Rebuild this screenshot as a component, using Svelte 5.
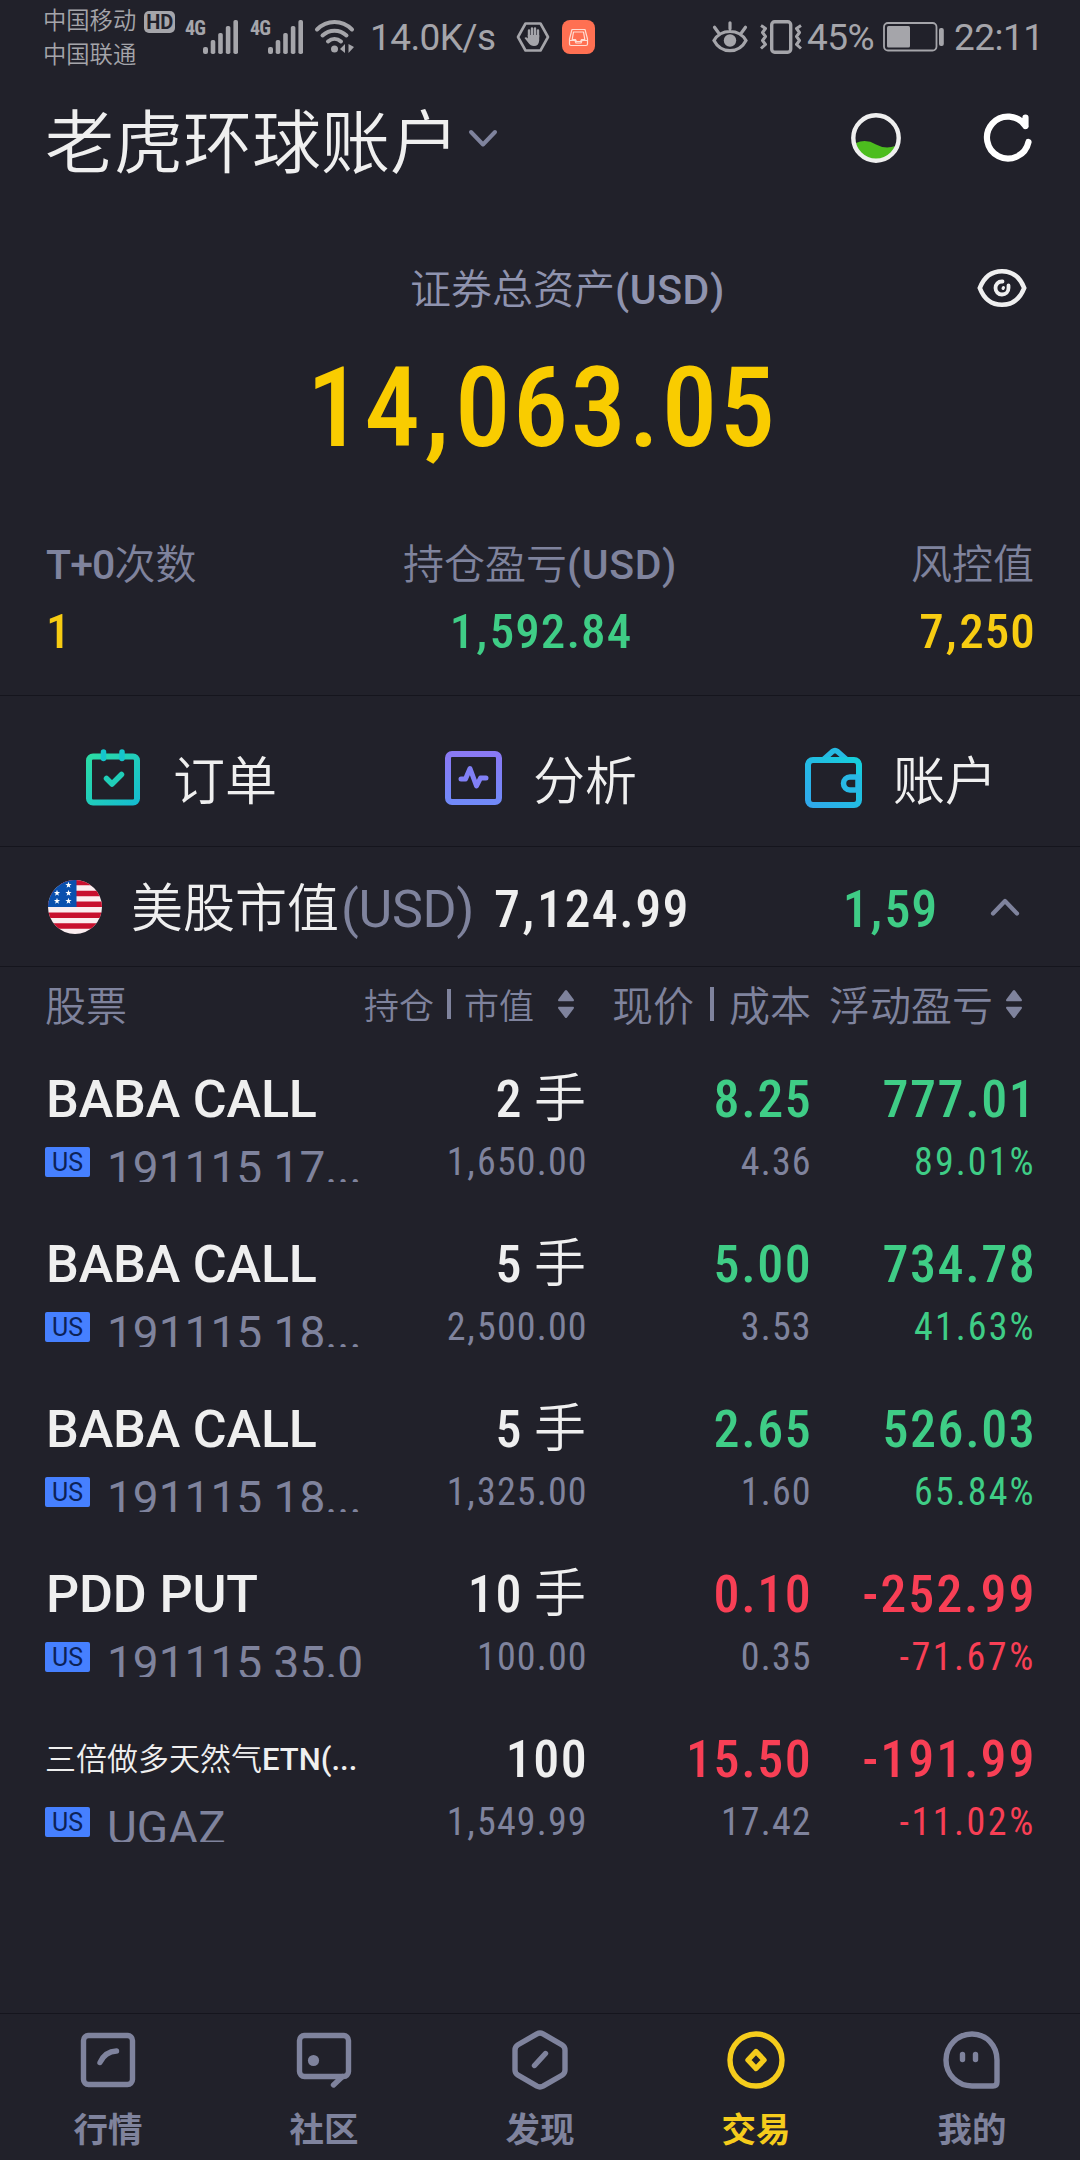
<script lang="ts">
	interface Holding {
		name: string;
		small?: boolean;
		code: string;
		qty: string;
		unit?: string;
		value: string;
		price: string;
		cost: string;
		pl: string;
		plPct: string;
	}

	const holdings: Holding[] = [
		{ name: 'BABA CALL', code: '191115 17...', qty: '2', unit: '手', value: '1,650.00', price: '8.25', cost: '4.36', pl: '777.01', plPct: '89.01%' },
		{ name: 'BABA CALL', code: '191115 18...', qty: '5', unit: '手', value: '2,500.00', price: '5.00', cost: '3.53', pl: '734.78', plPct: '41.63%' },
		{ name: 'BABA CALL', code: '191115 18...', qty: '5', unit: '手', value: '1,325.00', price: '2.65', cost: '1.60', pl: '526.03', plPct: '65.84%' },
		{ name: 'PDD PUT', code: '191115 35.0', qty: '10', unit: '手', value: '100.00', price: '0.10', cost: '0.35', pl: '-252.99', plPct: '-71.67%' },
		{ name: '三倍做多天然气', small: true, code: 'UGAZ', qty: '100', value: '1,549.99', price: '15.50', cost: '17.42', pl: '-191.99', plPct: '-11.02%' }
	];

	const tabs = [
		{ id: 'quotes', label: '行情' },
		{ id: 'community', label: '社区' },
		{ id: 'discover', label: '发现' },
		{ id: 'trade', label: '交易' },
		{ id: 'mine', label: '我的' }
	];

	let active = $state('trade');
</script>

{#snippet num(text: string)}
	{#each text.split(',') as part, i}{#if i > 0}<span class="comma">,</span>{/if}{part}{/each}
{/snippet}

{#snippet signal()}
	<span class="signal">
		<span class="signal__gen">4G</span>
		<svg width="36" height="34" viewBox="0 0 36 34" fill="currentColor">
			<rect x="0" y="27" width="5" height="7" rx="2" />
			<rect x="7.7" y="20" width="4.6" height="14" rx="1.8" />
			<rect x="15.2" y="13" width="4.6" height="21" rx="1.8" />
			<rect x="22.8" y="6" width="4.6" height="28" rx="1.8" />
			<rect x="30.4" y="0" width="4.6" height="34" rx="1.8" />
		</svg>
	</span>
{/snippet}

{#snippet sort()}
	<svg class="sort" width="16" height="28" viewBox="0 0 16 28" fill="currentColor">
		<path d="M7 .6a1.3 1.3 0 0 1 2 0l6.6 8.6c.7 1 .3 2-.8 2H1.2c-1.1 0-1.5-1-.8-2zM7 27.4a1.3 1.3 0 0 0 2 0l6.6-8.6c.7-1 .3-2-.8-2H1.2c-1.1 0-1.5 1-.8 2z" />
	</svg>
{/snippet}

<main class="screen">
	<div class="status">
		<div class="status__carriers">
			<div>中国移动<span class="hd">HD</span></div>
			<div>中国联通</div>
		</div>
		{@render signal()}
		{@render signal()}
		<svg class="wifi" width="40" height="34" viewBox="0 0 40 34" fill="none" stroke="currentColor" stroke-width="4" stroke-linecap="round">
			<path d="M2 9.5C12-.5 27-.5 37 9.5M7.5 15.5c7-6.5 17-6.5 24 0M13 21.5c4-3.5 9-3.5 13 0" />
			<circle cx="19.5" cy="29" r="3.5" fill="currentColor" stroke="none" />
			<path d="M30 24v9l-5-4zM33.5 24v9l5.5-6z" fill="currentColor" stroke="none" />
		</svg>
		<span class="status__speed">14.0K/s</span>
		<svg class="hand" width="34" height="30" viewBox="0 0 34 30" fill="none" stroke="currentColor">
			<path d="M9.5 1.5h15l7.5 13.5-7.5 13.5h-15L2 15z" stroke-width="2.6" stroke-linejoin="round" />
			<path d="M13 14V8.5M16 14V6.5M19 14V6.5M22 15V8.5" stroke-width="2.4" stroke-linecap="round" />
			<path d="M11.8 13h11.4v5.5q-.5 5.5-5.2 5.5-3.5 0-5.5-3L8.5 16q1.5-1.8 3.3.5z" fill="currentColor" stroke="none" />
		</svg>
		<svg width="33" height="34" viewBox="0 0 33 34" fill="none">
			<rect width="33" height="34" rx="8" fill="#ff7052" />
			<path d="M10 9.5h13L25.5 19v5q0 1.5-1.5 1.5H9q-1.5 0-1.5-1.5v-5zM7.5 20.5h5.5l1 2.5h5l1-2.5h5.5M11.5 12l-1.3 7.5h3.3l1 2h4l1-2h3.3L21.5 12z" stroke="#ffdcd2" stroke-width="1.2" stroke-linejoin="round" />
		</svg>

		<svg class="care" width="36" height="32" viewBox="0 0 36 32" fill="none" stroke="currentColor" stroke-width="3.2" stroke-linecap="round">
			<path d="M2 19.5C9 7.5 27 7.5 34 19.5 27 33 9 33 2 19.5zM18 1.8v6M2.5 6.2l4 5.5M33.5 6.2l-4 5.5" />
			<circle cx="18" cy="19.5" r="6.2" fill="currentColor" stroke="none" />
		</svg>
		<svg class="vibrate" width="42" height="34" viewBox="0 0 42 34" fill="none" stroke="currentColor" stroke-width="3.4" stroke-linejoin="round">
			<rect x="11.7" y="1.7" width="19" height="30.6" rx="3" />
			<path d="M1 5.5l4.5 3-3 4 3 4-3 4 3 4-4.5 4M41 5.5l-4.5 3 3 4-3 4 3 4-3 4 4.5 4" stroke-width="3" />
		</svg>
		<span class="status__battery">45%</span>
		<svg class="battery" width="62" height="30" viewBox="0 0 62 30" fill="none">
			<rect x="1" y="1" width="52.5" height="27.5" rx="4" stroke="currentColor" stroke-width="1.8" />
			<rect x="4" y="4" width="23" height="21.5" rx="1.5" fill="currentColor" />
			<rect x="56" y="6" width="4.8" height="18" rx="2" fill="currentColor" />
		</svg>
		<span class="status__time">22:11</span>
	</div>

	<header class="header">
		<h1>老虎环球账户</h1>
		<svg class="header__chevron" width="30" height="18" viewBox="0 0 30 18" fill="none" stroke="#7f839d" stroke-width="4" stroke-linecap="round" stroke-linejoin="round">
			<path d="M3 3l12 12.5L27 3" />
		</svg>
		<svg class="header__level" width="50" height="50" viewBox="0 0 50 50">
			<path d="M5 30q10-4.5 20 1.5 9 5 19.5 1.5A20.5 20.5 0 0 1 5 30z" fill="#4cbd1e" />
			<circle cx="25" cy="25" r="22.7" fill="none" stroke="#efefef" stroke-width="4.4" />
		</svg>
		<svg width="50" height="50" viewBox="0 0 50 50" fill="none" stroke="#fff" stroke-width="6.2" stroke-linecap="round" stroke-linejoin="round">
			<path d="M45.5 29A21 21 0 1 1 42.5 13M42.5 4.5v8.5" />
		</svg>
	</header>

	<section class="assets">
		<div class="assets__label">
			<span class="assets__title">证券总资产<b>(USD)</b></span>
			<svg width="50" height="40" viewBox="0 0 50 40" fill="none" stroke="#efefef" stroke-width="4.6" stroke-linecap="round">
				<path d="M2.8 20C7 9 15 3.2 25 3.2S43 9 47.2 20C43 31 35 36.8 25 36.8S7 31 2.8 20z" />
				<path d="M25.5 13.5c-4.5-.3-7 3-7 6.5s2.7 6.5 6.5 6.5 6.5-2.7 6.5-6.5V17.5" stroke-width="3.8" />
				<path d="M26 20.5l.5-1" stroke-width="3" />
			</svg>
		</div>
		<div class="assets__total">{@render num('14,063.05')}</div>
	</section>

	<section class="stats">
		<div class="stat">
			<div class="stat__label"><b>T+0</b>次数</div>
			<div class="stat__value yellow">1</div>
		</div>
		<div class="stat stat--center">
			<div class="stat__label">持仓盈亏<b>(USD)</b></div>
			<div class="stat__value up">{@render num('1,592.84')}</div>
		</div>
		<div class="stat stat--right">
			<div class="stat__label">风控值</div>
			<div class="stat__value yellow">{@render num('7,250')}</div>
		</div>
	</section>

	<section class="actions">
		<div class="action">
			<svg width="58" height="62" viewBox="0 0 58 62" fill="none" stroke-linecap="round" stroke-linejoin="round">
				<defs>
					<linearGradient id="g-order" x1="0" y1="0" x2="1" y2="1">
						<stop offset="0" stop-color="#2bdca6" />
						<stop offset="1" stop-color="#15bdd0" />
					</linearGradient>
				</defs>
				<rect x="5" y="9.5" width="48" height="46" rx="4" stroke="url(#g-order)" stroke-width="6" />
				<path d="M19.5 5v6.5M38 5v6.5" stroke="#15c5cc" stroke-width="5.5" />
				<path d="M22.5 31.5l5.5 5.5 9.500-9.5" stroke="#20ceb8" stroke-width="5.5" />
			</svg>
			<span>订单</span>
		</div>
		<div class="action">
			<svg width="58" height="62" viewBox="0 0 58 62" fill="none" stroke-linecap="round" stroke-linejoin="round">
				<defs>
					<linearGradient id="g-chart" x1="0" y1="0" x2="0" y2="1">
						<stop offset="0" stop-color="#8a79f4" />
						<stop offset="1" stop-color="#7189f8" />
					</linearGradient>
				</defs>
				<rect x="4" y="7" width="51" height="48" rx="4" stroke="url(#g-chart)" stroke-width="6" />
				<path d="M17 32h4.5L26 21.5 32.5 39l4-8H42" stroke="#8180f6" stroke-width="5" />
			</svg>
			<span>分析</span>
		</div>
		<div class="action">
			<svg width="58" height="62" viewBox="0 0 58 62" fill="none" stroke-linecap="round" stroke-linejoin="round">
				<defs>
					<linearGradient id="g-wallet" x1="0" y1="1" x2="1" y2="0">
						<stop offset="0" stop-color="#30a8ec" />
						<stop offset="1" stop-color="#16cfdb" />
					</linearGradient>
				</defs>
				<path d="M20 12l8.5-7.5q2.5-2 5 0L42 12" stroke="#26bae3" stroke-width="5.5" />
				<rect x="4" y="13" width="51" height="45" rx="5" stroke="url(#g-wallet)" stroke-width="6" />
				<path d="M54 30H46a6.5 6.5 0 0 0 0 13h8z" fill="#21212a" stroke="#28b8e5" stroke-width="5.5" />
			</svg>
			<span>账户</span>
		</div>
	</section>

	<section class="market">
		<svg class="market__flag" width="54" height="54" viewBox="0 0 54 54">
			<defs>
				<clipPath id="flag"><circle cx="27" cy="27" r="27" /></clipPath>
			</defs>
			<g clip-path="url(#flag)">
				<rect width="54" height="54" fill="#fbeef0" />
				<path d="M0 2.6h54M0 13.5h54M0 24.3h54M0 35.2h54M0 46h54" stroke="#c8102e" stroke-width="5.4" />
				<rect width="28.5" height="27" fill="#0a50ae" />
			</g>
			<g fill="#fff">
				{#each [[20.5, 5], [9, 13], [20.5, 13], [9, 21], [20.5, 21]] as [x, y]}
					<path transform="translate({x} {y})" d="M0-3.2l.8 2.2h2.3L1.2.5l.7 2.3L0 1.4l-1.9 1.4.7-2.3L-3.1-1h2.3z" />
				{/each}
			</g>
		</svg>
		<span class="market__name">美股市值</span><span class="market__currency">(USD)</span>
		<span class="market__value">{@render num('7,124.99')}</span>
		<span class="market__pl up">{@render num('1,59')}</span>
		<svg class="market__chevron" width="30" height="18" viewBox="0 0 30 18" fill="none" stroke="#7f839d" stroke-width="4.2" stroke-linecap="round" stroke-linejoin="round">
			<path d="M3 15.5L15 3l12 12.5" />
		</svg>
	</section>

	<section class="table">
		<div class="row row--head">
			<span>股票</span>
			<span class="head head--qty">持仓<i></i>市值{@render sort()}</span>
			<span class="head head--price">现价<i></i>成本</span>
			<span class="head head--pl">浮动盈亏{@render sort()}</span>
		</div>
		{#each holdings as h}
			{@const trend = h.pl.startsWith('-') ? 'down' : 'up'}
			<div class="row">
				<div class="cell cell--name">
					<div class="main main--name" class:main--small={h.small}>{h.name}{#if h.small}<b>ETN(...</b>{/if}</div>
					<div class="code"><span class="badge">US</span><span class="code__text">{h.code}</span></div>
				</div>
				<div class="cell">
					<div class="main" class:main--unit={h.unit}>{h.qty}{#if h.unit}<span class="unit">{h.unit}</span>{/if}</div>
					<div class="sub">{@render num(h.value)}</div>
				</div>
				<div class="cell">
					<div class="main {trend}">{h.price}</div>
					<div class="sub">{h.cost}</div>
				</div>
				<div class="cell">
					<div class="main main--pl {trend}">{h.pl}</div>
					<div class="sub sub--pct {trend}">{h.plPct}</div>
				</div>
			</div>
		{/each}
	</section>

	<nav class="tabs">
		{#each tabs as tab}
			<button class="tab" class:tab--active={tab.id === active} onclick={() => (active = tab.id)}>
				<svg width="64" height="64" viewBox="0 0 64 64" fill="none" stroke="currentColor" stroke-width="5.4" stroke-linecap="round" stroke-linejoin="round">
					{#if tab.id === 'quotes'}
						<rect x="7.5" y="7.5" width="49" height="49" rx="5" />
						<path d="M24 34.5Q29 23.5 40.5 23" />
					{:else if tab.id === 'community'}
						<rect x="7.5" y="7.5" width="49" height="41" rx="5" />
						<path d="M41.5 57l9-8.5" />
						<circle cx="21.5" cy="32.5" r="5.6" fill="currentColor" stroke="none" />
					{:else if tab.id === 'discover'}
						<path d="M29 5.8q3-1.6 6 0l19 11q3 1.8 3 5.2v20q0 3.4-3 5.2l-19 11q-3 1.6-6 0l-19-11Q7 45.4 7 42V22q0-3.4 3-5.2z" />
						<path d="M26.5 37.500l11-12" />
					{:else if tab.id === 'trade'}
						<circle cx="32" cy="32" r="26" />
						<path d="M32 23.5l8 8.5-8 8.5-8-8.5z" />
					{:else}
						<path d="M32 6C17.5 6 6 17.5 6 32s11.5 26 26 26h21q4 0 4-4V32C57 17.5 46.5 6 32 6z" />
						<path d="M22.5 26.5v5M35.5 26.5v5" />
					{/if}
				</svg>
				<span>{tab.label}</span>
			</button>
		{/each}
	</nav>
</main>

<style>
	:global(body) {
		background: #21212a;
	}

	.screen {
		display: flex;
		flex-direction: column;
		width: 1080px;
		height: 2160px;
		overflow: hidden;
		background: #21212a;
		color: #efefef;
		font-family: Roboto, 'Noto Sans CJK SC', sans-serif;
		font-weight: 350;
	}

	b {
		font-weight: 500;
		font-stretch: 95%;
	}

	svg {
		display: block;
		flex: none;
		overflow: visible;
	}

	.up {
		color: #3fcd86;
	}
	.down {
		color: #f83f55;
	}
	.yellow {
		color: #f7cc12;
	}

	.comma {
		margin: 0 0.03em 0 0.02em;
	}

	/* status bar */
	.status {
		display: flex;
		align-items: center;
		height: 74px;
		padding: 0 42px 0 43px;
		color: #a5a5aa;
		font-size: 37px;
		font-weight: 400;
	}
	.status__carriers {
		width: 142px;
		padding-top: 2px;
		font-size: 23.3px;
		font-weight: 350;
		line-height: 34.5px;
		white-space: nowrap;
	}
	.hd {
		display: inline-block;
		margin-left: 8px;
		width: 31px;
		height: 22px;
		border-radius: 5px;
		background: #a5a5aa;
		color: #21212a;
		font-size: 20px;
		font-weight: 700;
		line-height: 22px;
		text-align: center;
	}
	.signal {
		display: flex;
		margin-right: 11px;
	}
	.signal__gen {
		width: 18px;
		font-size: 20px;
		font-weight: 700;
		font-stretch: 80%;
		line-height: 17px;
		letter-spacing: -0.8px;
	}
	.wifi {
		margin-right: 15px;
	}
	.status__speed {
		width: 146px;
		letter-spacing: -0.6px;
	}
	.hand {
		margin-right: 12px;
	}
	.care {
		margin-left: auto;
		margin-right: 12px;
	}
	.vibrate {
		margin-right: 5px;
	}
	.status__battery {
		width: 76px;
		letter-spacing: -0.5px;
	}
	.battery {
		margin-right: 9px;
	}
	.status__time {
		width: 84px;
		letter-spacing: -0.5px;
	}

	/* account header */
	.header {
		display: flex;
		align-items: center;
		height: 128px;
		padding: 0 47px 0 45px;
	}
	.header h1 {
		margin: 0;
		padding-top: 13px;
		font-size: 69px;
		font-weight: 350;
		line-height: 96px;
	}
	.header__chevron {
		margin-left: 9px;
	}
	.header__level {
		margin-left: auto;
		margin-right: 82px;
	}

	/* total assets */
	.assets {
		padding: 56px 53px 0 0;
	}
	.assets__label {
		display: flex;
		align-items: center;
		justify-content: space-between;
		height: 60px;
		margin-left: 410px;
		color: #8f93ae;
		font-size: 41px;
	}
	.assets__title {
		padding-bottom: 4px;
	}
	.assets__label b,
	.stat__label b {
		letter-spacing: 0.014em;
	}
	.assets__total {
		margin: 35px 0 0 57px;
		color: #f9cc00;
		font-size: 111px;
		font-weight: 500;
		font-stretch: 85%;
		line-height: 110px;
		letter-spacing: 0.021em;
		text-align: center;
	}

	.stats {
		display: grid;
		grid-template-columns: 1fr auto 1fr;
		height: 155px;
		padding: 77px 46px 0;
		border-bottom: 1px solid #15151d;
	}
	.stat__label {
		color: #7f839d;
		font-size: 41px;
		line-height: 50px;
	}
	.stat:first-child b {
		letter-spacing: -0.02em;
	}
	.stat__value {
		margin: 17px -0.04em 0 0;
		font-size: 49px;
		font-weight: 500;
		font-stretch: 85%;
		line-height: 50px;
		letter-spacing: 0.022em;
	}
	.stat--center {
		text-align: center;
	}
	.stat--right {
		text-align: right;
	}

	/* shortcuts */
	.actions {
		display: grid;
		grid-template-columns: repeat(3, 360px);
		height: 150px;
		border-bottom: 1px solid #15151d;
	}
	.action {
		display: flex;
		align-items: center;
		gap: 31px;
		padding: 13px 0 0 84px;
		font-size: 52px;
	}

	/* market summary */
	.market {
		display: flex;
		align-items: center;
		height: 119px;
		padding: 0 60px 0 48px;
		border-bottom: 1px solid #15151d;
		font-size: 52px;
		line-height: 113px;
	}
	.market span {
		padding-top: 6px;
	}
	.market .comma {
		padding: 0;
	}
	.market__name {
		margin-left: 29px;
	}
	.market__currency {
		margin-left: 2px;
		color: #7f839d;
		font-weight: 400;
		letter-spacing: -0.006em;
	}
	.market__value {
		margin-left: 20px;
		font-weight: 500;
		font-stretch: 85%;
		letter-spacing: 0.027em;
	}
	.market__pl {
		margin-left: auto;
		font-weight: 500;
		font-stretch: 85%;
		letter-spacing: 0.015em;
	}
	.market__chevron {
		margin-left: 52px;
	}

	/* holdings */
	.row {
		display: grid;
		grid-template-columns: 317px 224px 224px 224px;
		height: 140px;
		padding: 25px 46px 0 45px;
	}
	.row--head {
		grid-template-columns: 319px 248px 217px 1fr;
		align-items: center;
		height: 72px;
		padding-top: 0;
		padding-bottom: 6px;
		color: #7f839d;
		font-size: 41px;
	}
	.head {
		display: flex;
		align-items: center;
		white-space: nowrap;
	}
	.head--qty {
		font-size: 35px;
	}
	.head i {
		width: 4px;
		height: 34px;
		margin: 1px 15.5px 0;
		background: currentColor;
	}
	.head--qty i {
		height: 30px;
		margin: 1px 13px 0;
	}
	.sort {
		margin-top: 1px;
	}
	.head--qty .sort {
		margin-left: 24px;
	}
	.head--pl .sort {
		margin-left: 13px;
	}
	.cell {
		text-align: right;
		white-space: nowrap;
	}
	.cell--name {
		text-align: left;
	}
	.main {
		margin-right: -0.045em;
		font-size: 52px;
		font-weight: 500;
		font-stretch: 85%;
		line-height: 60px;
		letter-spacing: 0.03em;
	}
	.main--unit {
		margin-right: 0;
	}
	.main--pl.down {
		letter-spacing: 0.037em;
	}
	.main--name {
		padding-left: 1px;
		font-stretch: 100%;
		letter-spacing: -0.003em;
	}
	.main--small {
		padding-left: 0;
		font-size: 31px;
		font-weight: 350;
		letter-spacing: 0;
	}
	.main--small b {
		letter-spacing: 0;
	}
	.unit {
		margin-left: 11px;
		font-weight: 350;
		letter-spacing: 0;
	}
	.sub {
		margin: 12px -0.045em 0 0;
		color: #7f839d;
		font-size: 38px;
		font-weight: 450;
		font-stretch: 85%;
		line-height: 40px;
		letter-spacing: 0.03em;
	}
	.sub.up {
		color: #3fcd86;
	}
	.sub.down {
		color: #f83f55;
	}
	.sub--pct {
		letter-spacing: 0.055em;
	}
	.sub--pct.down {
		letter-spacing: 0.066em;
	}
	.code {
		display: flex;
		height: 41px;
		margin-top: 11px;
		overflow: hidden;
	}
	.badge {
		flex: none;
		width: 45px;
		height: 30px;
		margin: 6px 17px 0 0;
		border-radius: 2px;
		background: #4680ff;
		color: #0c2257;
		font-size: 25px;
		font-weight: 400;
		line-height: 31px;
		text-align: center;
	}
	.code__text {
		color: #7f839d;
		font-size: 46px;
		font-weight: 450;
		line-height: 54px;
	}

	/* bottom tabs */
	.tabs {
		display: grid;
		grid-template-columns: repeat(5, 1fr);
		height: 146px;
		margin-top: auto;
		border-top: 1px solid #15151d;
	}
	.tab {
		display: flex;
		flex-direction: column;
		align-items: center;
		padding: 14px 0 0;
		border: 0;
		background: none;
		color: #7f839d;
		font: inherit;
		font-size: 34.5px;
		font-weight: 700;
		line-height: 50px;
	}
	.tab span {
		margin-top: 13px;
	}
	.tab--active {
		color: #f5cc1c;
	}
</style>
